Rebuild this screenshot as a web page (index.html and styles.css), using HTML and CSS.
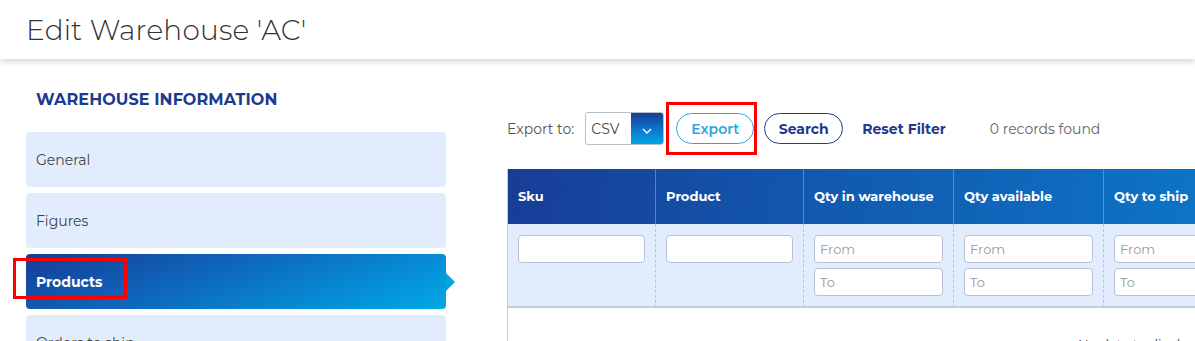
FILE: index.html
```html
<!DOCTYPE html>
<html>
<head>
<meta charset="utf-8">
<link rel="stylesheet" href="styles.css">
</head>
<body>
<header class="page-header">
  <h1 class="page-title">Edit Warehouse 'AC'</h1>
</header>
<div class="layout">
  <aside class="sidebar">
    <h2 class="sidebar-title">WAREHOUSE INFORMATION</h2>
    <nav class="nav">
      <a class="nav-item">General</a>
      <a class="nav-item">Figures</a>
      <a class="nav-item active">Products<span class="mark mark-products"></span></a>
      <a class="nav-item">Orders to ship</a>
    </nav>
  </aside>
  <main class="content">
    <div class="toolbar">
      <span class="export-label">Export to:</span>
      <div class="select">
        <span class="select-value">CSV</span>
        <span class="select-btn">
          <svg width="10" height="6" viewBox="0 0 10 6"><path d="M1 1l4 4 4-4" fill="none" stroke="#fff" stroke-width="1.4"/></svg>
        </span>
      </div>
      <button class="btn btn-export">Export<span class="mark mark-export"></span></button>
      <button class="btn btn-search">Search</button>
      <a class="reset">Reset Filter</a>
      <span class="count">0 records found</span>
    </div>
    <div class="grid">
      <div class="th">Sku</div>
      <div class="th">Product</div>
      <div class="th">Qty in warehouse</div>
      <div class="th">Qty available</div>
      <div class="th">Qty to ship</div>
      <div class="tf"><input class="inp"></div>
      <div class="tf"><input class="inp"></div>
      <div class="tf"><input class="inp" placeholder="From"><input class="inp" placeholder="To"></div>
      <div class="tf"><input class="inp" placeholder="From"><input class="inp" placeholder="To"></div>
      <div class="tf"><input class="inp" placeholder="From"><input class="inp" placeholder="To"></div>
      <div class="tbody">No data to display</div>
    </div>
  </main>
</div>
</body>
</html>
```

FILE: styles.css
```css
* { box-sizing: border-box; }
html, body { margin: 0; padding: 0; }
body {
  width: 1195px;
  height: 341px;
  overflow: hidden;
  background: #fff;
  font-family: "Montserrat", Inter, "Open Sans", sans-serif;
  color: #444;
}
.page-header {
  height: 59px;
  background: #fff;
  box-shadow: 0 3px 6px rgba(0,0,0,0.16);
  position: relative;
  z-index: 2;
  display: flex;
  align-items: center;
  padding-left: 26px;
}
.page-title {
  margin: 0;
  font-weight: 300;
  font-size: 28px;
  color: #333;
  letter-spacing: 0.2px;
}
.layout {
  display: flex;
}
.sidebar {
  width: 446px;
  padding-left: 26px;
  padding-top: 31px;
  flex: none;
}
.sidebar-title {
  margin: 0 0 22px 10px;
  font-size: 16px;
  line-height: 20px;
  font-weight: 700;
  color: #1d3a8f;
  letter-spacing: 0.1px;
}
.nav { display: flex; flex-direction: column; gap: 6px; }
.nav-item {
  position: relative;
  height: 55px;
  background: #e1edfd;
  border-radius: 4px;
  display: flex;
  align-items: center;
  padding-left: 10px;
  font-size: 14px;
  color: #444;
}
.nav-item.active {
  background: linear-gradient(160deg, #173c97 0%, #0d6bbf 45%, #00a9e7 100%);
  color: #fff;
  font-weight: 700;
}
.nav-item.active::after {
  content: "";
  position: absolute;
  right: -9px;
  top: 50%;
  margin-top: -9px;
  border-left: 9px solid #05a2e2;
  border-top: 9px solid transparent;
  border-bottom: 9px solid transparent;
}
.mark {
  position: absolute;
  border: 3px solid #f00;
  pointer-events: none;
}
.mark-products { left: -13px; top: 4px; width: 114px; height: 41px; }
.content {
  margin-left: 61px;
  padding-top: 53px;
  flex: none;
  width: 700px;
}
.toolbar {
  display: flex;
  align-items: center;
  height: 33px;
  font-size: 14px;
}
.export-label { color: #555; margin-right: 11px; }
.select {
  display: flex;
  width: 79px;
  height: 33px;
  border: 1px solid #b9bec6;
  border-radius: 3px;
  overflow: hidden;
}
.select-value { flex: 1; padding-left: 5px; display: flex; align-items: center; color: #444; font-size: 14px; }
.select-btn {
  width: 32px;
  background: linear-gradient(180deg, #183c96 0%, #0a7ed2 60%, #00a6e6 100%);
  display: flex;
  align-items: center;
  justify-content: center;
  padding-top: 4px;
}
.btn {
  position: relative;
  height: 31px;
  border-radius: 16px;
  background: #fff;
  font-family: inherit;
  font-size: 14px;
  font-weight: 700;
  padding: 0;
}
.btn-export {
  margin-left: 12px;
  width: 78px;
  border: 1px solid #29abe2;
  color: #29a7e0;
  font-weight: 600;
}
.mark-export { left: -11px; top: -12px; width: 91px; height: 53px; }
.btn-search {
  margin-left: 10px;
  width: 79px;
  border: 1px solid #1f3a8c;
  color: #1f3a8c;
}
.reset {
  margin-left: 19px;
  font-weight: 700;
  color: #1f3a8c;
}
.count { margin-left: 44px; color: #666; }
.grid {
  margin-top: 24px;
  display: grid;
  grid-template-columns: 148px 148px 150px 150px 150px;
  border-left: 1px solid #c3cddc;
  width: 747px;
  background:
    linear-gradient(100deg, #183c96 0%, #1258ae 40%, #0c78c8 100%) 0 0 / 100% 55px no-repeat;
}
.th {
  height: 55px;
  display: flex;
  align-items: center;
  padding-left: 10px;
  padding-bottom: 1px;
  color: #fff;
  font-size: 13px;
  font-weight: 700;
  border-right: 1px solid rgba(120,170,230,0.6);
}
.tf {
  height: 84px;
  background: #e1edfd;
  padding: 11px 10px 10px 10px;
  border-right: 1px dashed #b7c2d2;
  border-bottom: 2px solid #c3cddc;
  display: flex;
  flex-direction: column;
  gap: 5px;
}
.inp {
  width: 100%;
  height: 28px;
  flex: none;
  border: 1px solid #b8c2d4;
  border-radius: 4px;
  background: #fff;
  padding: 0 5px;
  font-family: inherit;
  font-size: 13px;
  color: #444;
}
.inp::placeholder { color: #999; }
.tbody {
  grid-column: 1 / -1;
  height: 60px;
  padding-top: 28px;
  padding-left: 570px;
  font-size: 13px;
  color: #333;
  background: #fff;
}
```
